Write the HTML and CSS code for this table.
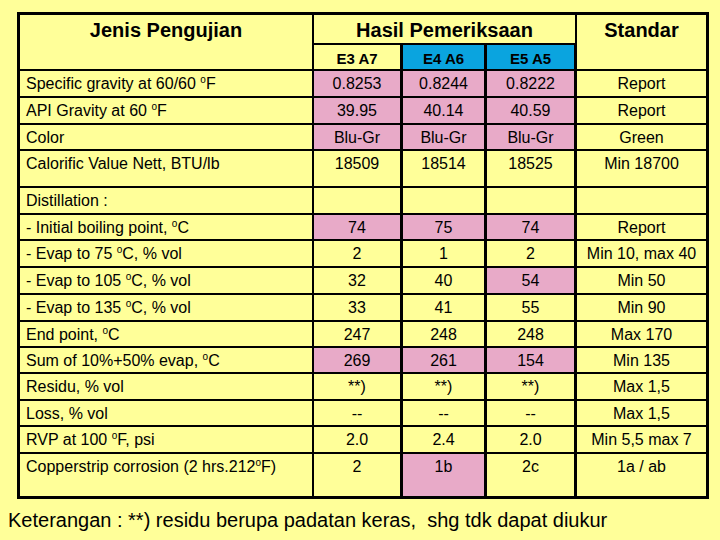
FILE: index.html
```html
<!DOCTYPE html>
<html lang="id">
<head>
<meta charset="utf-8">
<title>Hasil Pemeriksaan</title>
<link rel="stylesheet" href="styles.css">
</head>
<body>
<table class="tbl">
  <colgroup>
    <col class="c1"><col class="c2"><col class="c3"><col class="c4"><col class="c5">
  </colgroup>
  <tr class="r30">
    <th class="hd lbl" rowspan="2">Jenis Pengujian</th>
    <th class="hd grp" colspan="3">Hasil Pemeriksaan</th>
    <th class="hd s" rowspan="2">Standar</th>
  </tr>
  <tr class="r26">
    <th class="sub v">E3 A7</th>
    <th class="sub v blue">E4 A6</th>
    <th class="sub v blue">E5 A5</th>
  </tr>
  <tr>
    <td class="lbl">Specific gravity at 60/60 <sup class="deg">o</sup>F</td>
    <td class="v pk">0.8253</td><td class="v pk">0.8244</td><td class="v pk">0.8222</td>
    <td class="s">Report</td>
  </tr>
  <tr>
    <td class="lbl">API Gravity at 60 <sup class="deg">o</sup>F</td>
    <td class="v pk">39.95</td><td class="v pk">40.14</td><td class="v pk">40.59</td>
    <td class="s">Report</td>
  </tr>
  <tr class="r26">
    <td class="lbl">Color</td>
    <td class="v pk">Blu-Gr</td><td class="v pk">Blu-Gr</td><td class="v pk">Blu-Gr</td>
    <td class="s">Green</td>
  </tr>
  <tr class="r37">
    <td class="lbl">Calorific Value Nett, BTU/lb</td>
    <td class="v">18509</td><td class="v">18514</td><td class="v">18525</td>
    <td class="s">Min 18700</td>
  </tr>
  <tr>
    <td class="lbl">Distillation :</td>
    <td class="v"></td><td class="v"></td><td class="v"></td>
    <td class="s"></td>
  </tr>
  <tr class="r26">
    <td class="lbl">- Initial boiling point, <sup class="deg">o</sup>C</td>
    <td class="v pk">74</td><td class="v pk">75</td><td class="v pk">74</td>
    <td class="s">Report</td>
  </tr>
  <tr>
    <td class="lbl">- Evap to 75 <sup class="deg">o</sup>C, % vol</td>
    <td class="v">2</td><td class="v">1</td><td class="v">2</td>
    <td class="s">Min 10, max 40</td>
  </tr>
  <tr>
    <td class="lbl">- Evap to 105 <sup class="deg">o</sup>C, % vol</td>
    <td class="v">32</td><td class="v">40</td><td class="v pk">54</td>
    <td class="s">Min 50</td>
  </tr>
  <tr>
    <td class="lbl">- Evap to 135 <sup class="deg">o</sup>C, % vol</td>
    <td class="v">33</td><td class="v">41</td><td class="v">55</td>
    <td class="s">Min 90</td>
  </tr>
  <tr class="r26">
    <td class="lbl">End point, <sup class="deg">o</sup>C</td>
    <td class="v">247</td><td class="v">248</td><td class="v">248</td>
    <td class="s">Max 170</td>
  </tr>
  <tr class="r26">
    <td class="lbl">Sum of 10%+50% evap, <sup class="deg">o</sup>C</td>
    <td class="v pk">269</td><td class="v pk">261</td><td class="v pk">154</td>
    <td class="s">Min 135</td>
  </tr>
  <tr>
    <td class="lbl">Residu, % vol</td>
    <td class="v">**)</td><td class="v">**)</td><td class="v">**)</td>
    <td class="s">Max 1,5</td>
  </tr>
  <tr class="r26">
    <td class="lbl">Loss, % vol</td>
    <td class="v">--</td><td class="v">--</td><td class="v">--</td>
    <td class="s">Max 1,5</td>
  </tr>
  <tr>
    <td class="lbl">RVP at 100 <sup class="deg">o</sup>F, psi</td>
    <td class="v">2.0</td><td class="v">2.4</td><td class="v">2.0</td>
    <td class="s">Min 5,5 max 7</td>
  </tr>
  <tr class="r45 last">
    <td class="lbl">Copperstrip corrosion (2 hrs.212<sup class="deg">o</sup>F)</td>
    <td class="v">2</td><td class="v pk">1b</td><td class="v">2c</td>
    <td class="s">1a / ab</td>
  </tr>
</table>
<p class="note">Keterangan : **) residu berupa padatan keras,&nbsp; shg tdk dapat diukur</p>
</body>
</html>
```

FILE: styles.css
```css
html, body {
  margin: 0;
  padding: 0;
  background: #ffff99;
}

body {
  font-family: "Liberation Sans", Arial, sans-serif;
  color: #000;
  overflow: hidden;
}

.tbl {
  margin: 12px 0 0 17px;
  width: 692px;
  table-layout: fixed;
  border-collapse: separate;
  border-spacing: 0;
  border-top: 3px solid #000;
  border-left: 3px solid #000;
}

.c1 { width: 294px; }
.c2 { width: 89px; }
.c3 { width: 84px; }
.c4 { width: 90px; }
.c5 { width: 132px; }

.tbl tr { height: 27px; }
.tbl tr.r26 { height: 26px; }
.tbl tr.r30 { height: 30px; }
.tbl tr.r37 { height: 37px; }
.tbl tr.r45 { height: 45px; }

.tbl td,
.tbl th {
  box-sizing: border-box;
  vertical-align: top;
  padding: 4px 0 0 0;
  font-size: 16px;
  line-height: 18px;
  font-weight: normal;
  text-align: center;
  white-space: nowrap;
  border-bottom: 2px solid #000;
}

.tbl .lbl {
  text-align: left;
  padding-left: 6px;
  border-right: 2px solid #000;
}

.tbl .v { border-right: 3px solid #000; }
.tbl .s { border-right: 3px solid #000; }
.tbl .grp { border-right: 2px solid #000; }

.tbl th.hd {
  font-size: 20px;
  line-height: 23px;
  font-weight: bold;
  text-align: center;
  padding: 4px 0 0 0;
}

.tbl th.sub {
  font-size: 15px;
  line-height: 17px;
  font-weight: bold;
  padding-top: 5px;
}

.tbl .blue { background: #0aa4df; }
.tbl .pk { background: #e8aac8; }

.tbl tr.last td { border-bottom: 3px solid #000; }

.deg {
  font-size: 10px;
  line-height: 0;
  vertical-align: 6px;
}

.note {
  margin: 10px 0 0 8px;
  font-size: 20px;
  line-height: 23px;
}
```
